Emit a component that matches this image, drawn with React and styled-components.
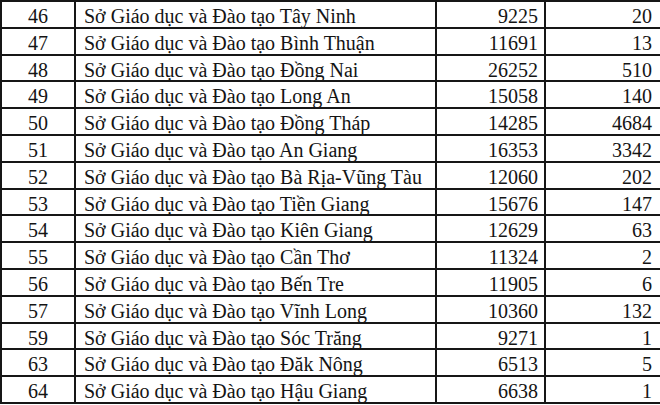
import React from 'react';
import styled, { createGlobalStyle } from 'styled-components';

const GlobalStyle = createGlobalStyle`
  html, body {
    margin: 0;
    padding: 0;
    background: #ffffff;
    overflow: hidden;
  }
  * {
    box-sizing: border-box;
  }
`;

const Page = styled.div`
  width: 660px;
  height: 405px;
  overflow: hidden;
`;

const Sheet = styled.div`
  width: 662px;
  display: flex;
  flex-direction: column;
  border-top: 2px solid #161616;
  border-left: 2px solid #161616;
  font-family: "Liberation Serif", "Times New Roman", serif;
  font-size: 20px;
  color: #141414;
`;

const Row = styled.div`
  display: grid;
  grid-template-columns: 74px 361px 109px 1fr;
  height: 26.8px;
  border-bottom: 2px solid #161616;
`;

const Cell = styled.div`
  display: flex;
  align-items: flex-start;
  justify-content: ${p => p.$align === 'center' ? 'center' : p.$align === 'right' ? 'flex-end' : 'flex-start'};
  padding: 2px ${p => p.$padRight || 8}px 0 8px;
  line-height: 24px;
  white-space: nowrap;
  overflow: hidden;
  border-right: 2px solid #161616;
`;

const rows = [
  ['46', 'Tây Ninh', '9225', '20'],
  ['47', 'Bình Thuận', '11691', '13'],
  ['48', 'Đồng Nai', '26252', '510'],
  ['49', 'Long An', '15058', '140'],
  ['50', 'Đồng Tháp', '14285', '4684'],
  ['51', 'An Giang', '16353', '3342'],
  ['52', 'Bà Rịa-Vũng Tàu', '12060', '202'],
  ['53', 'Tiền Giang', '15676', '147'],
  ['54', 'Kiên Giang', '12629', '63'],
  ['55', 'Cần Thơ', '11324', '2'],
  ['56', 'Bến Tre', '11905', '6'],
  ['57', 'Vĩnh Long', '10360', '132'],
  ['59', 'Sóc Trăng', '9271', '1'],
  ['63', 'Đăk Nông', '6513', '5'],
  ['64', 'Hậu Giang', '6638', '1'],
];

const App = () => (
  <Page>
    <GlobalStyle />
    <Sheet>
      {rows.map(([no, name, total, count]) => (
        <Row key={no}>
          <Cell $align="center">{no}</Cell>
          <Cell>Sở Giáo dục và Đào tạo {name}</Cell>
          <Cell $align="right" $padRight={6}>{total}</Cell>
          <Cell $align="right" $padRight={8}>{count}</Cell>
        </Row>
      ))}
    </Sheet>
  </Page>
);

export default App;
